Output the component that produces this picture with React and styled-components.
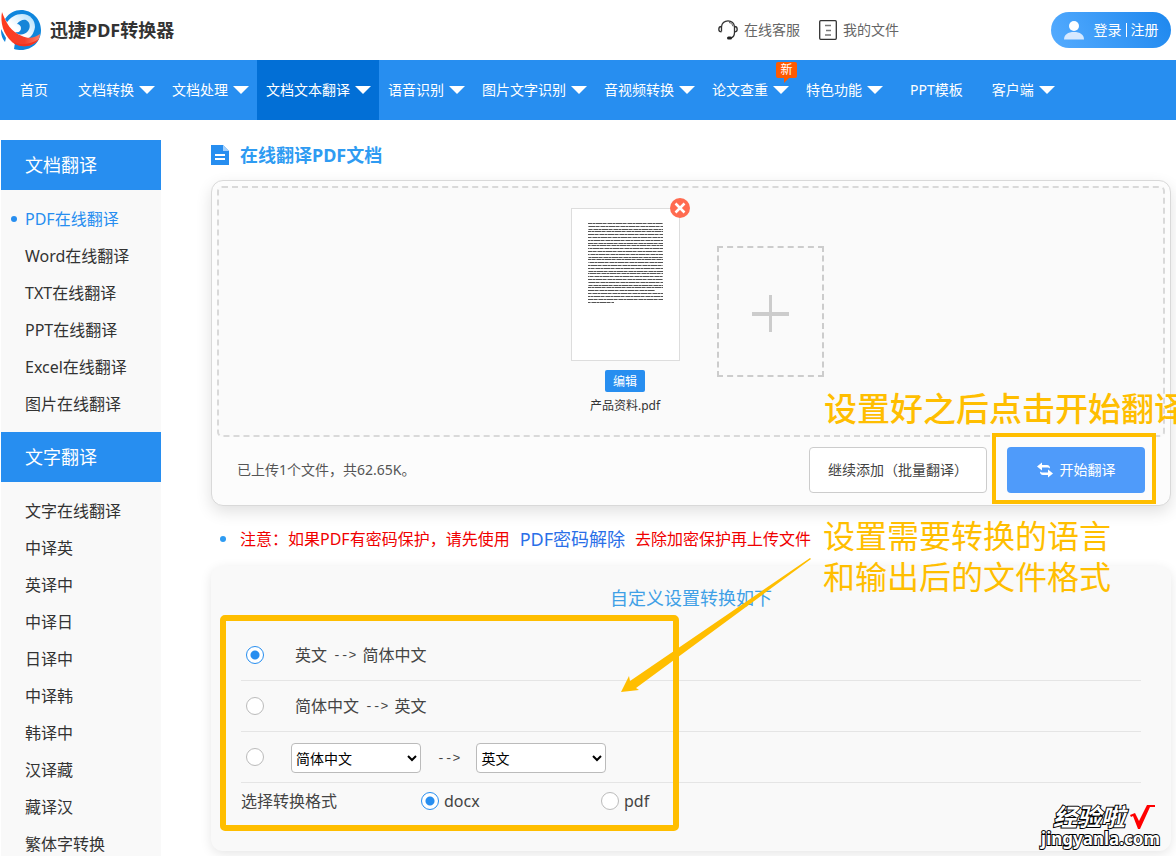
import React, { useState } from "react";
import styled, { createGlobalStyle, css } from "styled-components";

const navItems = [
  { label: "首页" },
  { label: "文档转换", menu: true },
  { label: "文档处理", menu: true },
  { label: "文档文本翻译", menu: true, active: true },
  { label: "语音识别", menu: true },
  { label: "图片文字识别", menu: true },
  { label: "音视频转换", menu: true },
  { label: "论文查重", menu: true, badge: "新" },
  { label: "特色功能", menu: true },
  { label: "PPT模板" },
  { label: "客户端", menu: true },
];

const sideGroups = [
  {
    title: "文档翻译",
    items: [
      "PDF在线翻译",
      "Word在线翻译",
      "TXT在线翻译",
      "PPT在线翻译",
      "Excel在线翻译",
      "图片在线翻译",
    ],
  },
  {
    title: "文字翻译",
    items: [
      "文字在线翻译",
      "中译英",
      "英译中",
      "中译日",
      "日译中",
      "中译韩",
      "韩译中",
      "汉译藏",
      "藏译汉",
      "繁体字转换",
    ],
  },
];

const languages = ["简体中文", "英文", "日文", "韩文"];

// y of each text line on the page thumbnail
const lineRows = [
  15, 18, 21, 23, 26, 29, 32, 35, 37, 40, 43, 46, 49, 51, 54, 57, 60, 63, 65,
  68, 71, 74, 77, 79, 82, 85, 88, 91, 94,
];

const lineWidth = (row) => {
  if (row === 82) return 67;
  if (row === 94) return 26;
  return 75;
};

const Logo = () => (
  <svg width="42" height="42" viewBox="0 0 42 42" aria-hidden="true">
    <defs>
      <linearGradient id="swirl" x1="0" y1="1" x2="1" y2="0">
        <stop offset="0.4" stopColor="#fff" />
        <stop offset="1" stopColor="#a9dcfb" />
      </linearGradient>
      <linearGradient id="sash" x1="0" y1="0" x2="1" y2="0">
        <stop offset="0" stopColor="#ff3b1d" />
        <stop offset="0.6" stopColor="#f4402c" />
        <stop offset="1" stopColor="#ff8069" />
      </linearGradient>
    </defs>
    <path
      d="M5 10C9 4 15 1 21 1c11 0 20 9 20 20 0 11-8 20-20 20-2 0-5-.3-7-1l2-13z"
      fill="#0f86dd"
    />
    <path d="M1 20c0 6 1 9 4 13l1-4z" fill="#0f86dd" />
    <path
      d="M6 15C10 8 16 5 22 5c8 0 13 6 13 13-1 7-5 12-11 13-9 1-16-7-18-16z"
      fill="url(#swirl)"
    />
    <path
      d="M17 15c2-3 6-5 9-4 4 2 5 7 2 11-3 4-9 5-13 1 4 1 6-1 6-4 0-2-2-4-4-4z"
      fill="#1585d8"
    />
    <path
      d="M2 3c-2 10 1 22 10 30 8 6 17 5 23 1 4-3 5-6 5-9-5 4-12 5-18 2C11 23 6 14 2 3z"
      fill="url(#sash)"
    />
    <path d="M12 33c8 6 17 5 23 1 2-1 3-3 4-4-8 5-17 7-27 3z" fill="#f2331f" />
  </svg>
);

const HeadsetIcon = () => (
  <svg width="20" height="20" viewBox="0 0 20 20" fill="none" aria-hidden="true">
    <path
      d="M3.5 11.5V7C3.5 3.5 6.5.8 10 .8s6.500 2.700 6.500 6.200v5.500c0 3-1.500 5-4 5.500"
      stroke="#333"
      strokeWidth="1.3"
    />
    <path d="M11 2.500c2 .3 3.500 1.600 4 3.800" stroke="#555" strokeWidth="1" />
    <path
      d="M3.500 6.500C1.500 6.500.8 7.500.8 9.200s.7 2.600 2.700 2.600M16.500 6.500c2 0 2.700 1 2.700 2.700s-.7 2.600-2.700 2.600"
      stroke="#333"
      strokeWidth="1.3"
    />
    <rect x="9" y="16.5" width="5" height="3" rx="1.5" fill="#222" />
  </svg>
);

const FilesIcon = () => (
  <svg width="18" height="20" viewBox="0 0 18 20" fill="none" aria-hidden="true">
    <rect x="0.7" y="0.7" width="16.6" height="18.6" rx="1" stroke="#333" strokeWidth="1.3" />
    <path d="M6 5.500h6M7 10.500h5M6 15h6" stroke="#777" strokeWidth="1.3" />
  </svg>
);

const UserIcon = () => (
  <svg width="20" height="20" viewBox="0 0 20 20" aria-hidden="true">
    <circle cx="10" cy="6" r="5" fill="#fff" />
    <path d="M0 19.500c0-5 4-7.500 10-7.500s10 2.500 10 7.500z" fill="#d6e9ff" />
  </svg>
);

const DocIcon = () => (
  <svg width="18" height="20" viewBox="0 0 18 20" aria-hidden="true">
    <path d="M0 0h12l6 6v14H0z" fill="#278ef0" />
    <path d="M12 0l6 6h-6z" fill="#a5d0fa" />
    <path d="M4 10h10M4 14h10" stroke="#fff" strokeWidth="2" />
  </svg>
);

const SwapIcon = () => (
  <svg width="16" height="16" viewBox="0 0 16 16" aria-hidden="true">
    <path d="M0 4.500L5 .5V3h5c2 0 3 1.500 3 3.500-1-.8-1.500-1-3-1H5v3z" fill="#fff" />
    <path d="M16 11.500l-5 4V13H6c-2 0-3-1.500-3-3.500 1 .8 1.500 1 3 1h5v-3z" fill="#fff" />
  </svg>
);

const PageThumb = () => (
  <svg width="107" height="151" viewBox="1 1 107 151" aria-hidden="true">
    {lineRows.map((row, i) => (
      <g key={row} fill="none">
        <path d={`M17 ${row}.5h${lineWidth(row)}`} stroke="#999" />
        <path
          d={`M17 ${row}.5h${lineWidth(row)}`}
          stroke="#555"
          strokeDasharray="4 1 2 1 6 1 3 2"
          strokeDashoffset={i * 7}
        />
      </g>
    ))}
  </svg>
);

const App = () => {
  const [direction, setDirection] = useState("en-zh");
  const [format, setFormat] = useState("docx");

  return (
    <Page>
      <GlobalStyle />
      <TopBar>
        <Brand href="#">
          <Logo />
          <span>迅捷PDF转换器</span>
        </Brand>
        <TopLinks>
          <TopLink href="#">
            <HeadsetIcon />
            在线客服
          </TopLink>
          <TopLink href="#">
            <FilesIcon />
            我的文件
          </TopLink>
        </TopLinks>
        <LoginButton type="button">
          <UserIcon />
          <span>登录</span>
          <i />
          <span>注册</span>
        </LoginButton>
      </TopBar>

      <Nav>
        {navItems.map((item) => (
          <NavItem href="#" key={item.label} $menu={item.menu} $active={item.active}>
            {item.label}
            {item.menu && <Caret />}
            {item.badge && <Badge>{item.badge}</Badge>}
          </NavItem>
        ))}
      </Nav>

      <Body>
        <Sidebar>
          {sideGroups.map((group) => (
            <section key={group.title}>
              <SideTitle>{group.title}</SideTitle>
              <SideList>
                {group.items.map((name) => (
                  <li key={name}>
                    <SideLink href="#" $active={name === "PDF在线翻译"}>
                      {name}
                    </SideLink>
                  </li>
                ))}
              </SideList>
            </section>
          ))}
        </Sidebar>

        <Main>
          <Title>
            <DocIcon />
            在线翻译PDF文档
          </Title>

          <UploadPanel>
            <DropZone>
              <FileCard>
                <Thumb>
                  <PageThumb />
                  <RemoveButton type="button" aria-label="删除">
                    <svg width="20" height="20" viewBox="0 0 20 20">
                      <path d="M5.500 5.500l9 9M14.500 5.500l-9 9" stroke="#fff" strokeWidth="2.5" />
                    </svg>
                  </RemoveButton>
                </Thumb>
                <EditButton type="button">编辑</EditButton>
                <FileName>产品资料.pdf</FileName>
              </FileCard>
              <AddTile type="button" aria-label="添加文件">
                <svg width="37" height="37" viewBox="0 0 37 37">
                  <path d="M0 19h37" stroke="#ccc" strokeWidth="4" />
                  <path d="M18.500 0v37" stroke="#ccc" strokeWidth="3" />
                </svg>
              </AddTile>
            </DropZone>
            <PanelFooter>
              <UploadInfo>已上传1个文件，共62.65K。</UploadInfo>
              <MoreButton type="button">继续添加（批量翻译）</MoreButton>
              <StartWrap>
                <StartButton type="button">
                  <SwapIcon />
                  开始翻译
                </StartButton>
                <StartFrame />
                <StartCaption>设置好之后点击开始翻译</StartCaption>
              </StartWrap>
            </PanelFooter>
          </UploadPanel>

          <Notice>
            注意：如果PDF有密码保护，请先使用
            <a href="#">PDF密码解除</a>
            去除加密保护再上传文件
          </Notice>

          <Settings>
            <h2>自定义设置转换如下</h2>
            <OptionRow>
              <Radio
                id="en-zh"
                name="direction"
                checked={direction === "en-zh"}
                onChange={() => setDirection("en-zh")}
              />
              <OptionLabel htmlFor="en-zh">
                英文<Arrow>--&gt;</Arrow>简体中文
              </OptionLabel>
            </OptionRow>
            <OptionRow>
              <Radio
                id="zh-en"
                name="direction"
                checked={direction === "zh-en"}
                onChange={() => setDirection("zh-en")}
              />
              <OptionLabel htmlFor="zh-en">
                简体中文<Arrow>--&gt;</Arrow>英文
              </OptionLabel>
            </OptionRow>
            <OptionRow>
              <Radio
                id="custom"
                name="direction"
                aria-label="自定义语言"
                checked={direction === "custom"}
                onChange={() => setDirection("custom")}
              />
              <LanguagePair>
                <Select aria-label="源语言" defaultValue="简体中文">
                  {languages.map((name) => (
                    <option key={name}>{name}</option>
                  ))}
                </Select>
                <Arrow>--&gt;</Arrow>
                <Select aria-label="目标语言" defaultValue="英文">
                  {languages.map((name) => (
                    <option key={name}>{name}</option>
                  ))}
                </Select>
              </LanguagePair>
            </OptionRow>
            <FormatRow>
              <span>选择转换格式</span>
              {["docx", "pdf"].map((name) => (
                <FormatLabel key={name}>
                  <Radio
                    name="format"
                    checked={format === name}
                    onChange={() => setFormat(name)}
                  />
                  {name}
                </FormatLabel>
              ))}
            </FormatRow>

            <SettingsFrame />
            <Pointer width="190" height="135" viewBox="0 0 190 135" aria-hidden="true">
              <path d="M0 134L8 118L9 123L189 0L190 1L15 130L18 132Z" fill="#ffbe00" />
            </Pointer>
            <SettingsCaption>
              设置需要转换的语言
              <br />
              和输出后的文件格式
            </SettingsCaption>
          </Settings>
        </Main>
      </Body>

      <Watermark>
        <div>
          <em>经验啦</em>
          <svg width="25" height="24" viewBox="0 0 25 24" aria-hidden="true">
            <path d="M0 10l5-2 4 8L17 0h8v2h-5L10 24H8L3 11l-2 1z" fill="#f00" stroke="none" />
          </svg>
        </div>
        <strong>jingyanla.com</strong>
      </Watermark>
    </Page>
  );
};

const GlobalStyle = createGlobalStyle`
  * {
    box-sizing: border-box;
  }

  body {
    margin: 0;
    background: #fff;
    color: #333;
    font-family: "Noto Sans", "Noto Sans CJK SC", sans-serif;
    font-size: 14px;
    line-height: 20px;
  }

  button, select, input {
    font-family: inherit;
    margin: 0;
  }

  h1, h2, p, ul {
    margin: 0;
    padding: 0;
  }

  a {
    text-decoration: none;
  }
`;

const Page = styled.div`
  position: relative;
  height: 100vh;
  overflow: hidden;
`;

const TopBar = styled.header`
  display: flex;
  align-items: center;
  height: 60px;
  padding-right: 5px;
`;

const Brand = styled.a`
  display: flex;
  align-items: center;
  gap: 8px;
  color: #333;
  font-size: 18px;
  font-weight: 700;
`;

const TopLinks = styled.div`
  display: flex;
  gap: 19px;
  margin-left: auto;
  margin-right: 152px;
`;

const TopLink = styled.a`
  display: flex;
  align-items: center;
  gap: 6px;
  color: #666;
`;

const LoginButton = styled.button`
  display: flex;
  align-items: center;
  justify-content: center;
  width: 120px;
  height: 36px;
  padding: 0;
  border: 0;
  border-radius: 18px;
  background: linear-gradient(60deg, #55acff, #1d87ee);
  color: #fff;
  font-size: 14px;
  line-height: 20px;

  svg {
    margin-right: 10px;
  }

  i {
    width: 1px;
    height: 14px;
    margin: 0 4px;
    background: #fff;
  }
`;

const Nav = styled.nav`
  display: flex;
  height: 60px;
  padding-left: 1px;
  background: #278ef0;
`;

const NavItem = styled.a`
  position: relative;
  display: flex;
  align-items: center;
  gap: 5px;
  flex-shrink: 0;
  padding: ${({ $menu }) => ($menu ? "0 8px 0 9px" : "0 20px 0 19px")};
  background: ${({ $active }) => ($active ? "#026fd6" : "transparent")};
  color: #fff;

  &:first-child {
    padding-right: 21px;
  }
`;

const Caret = styled.span`
  border: 8px solid transparent;
  border-top-color: #fff;
  border-bottom: 0;
`;

const Badge = styled.span`
  position: absolute;
  top: 2px;
  right: 0;
  width: 21px;
  border-radius: 2px;
  background: #ff5a00;
  font-size: 12px;
  line-height: 16px;
  text-align: center;

  &::after {
    content: "";
    position: absolute;
    top: 16px;
    left: 8px;
    border-top: 5px solid #ff5a00;
    border-right: 5px solid transparent;
  }
`;

const Body = styled.div`
  display: flex;
  gap: 50px;
  padding: 20px 5px 0 1px;
`;

const Sidebar = styled.aside`
  flex: 0 0 160px;
  background: #f9f9f9;
`;

const SideTitle = styled.h2`
  padding-left: 24px;
  background: #278ef0;
  color: #fff;
  font-size: 18px;
  font-weight: 400;
  line-height: 50px;
`;

const SideList = styled.ul`
  padding: 11px 0 9px;
  list-style: none;
`;

const SideLink = styled.a`
  position: relative;
  display: block;
  padding-left: 24px;
  color: #333;
  font-size: 16px;
  line-height: 37px;

  ${({ $active }) =>
    $active &&
    css`
      color: #278ef0;

      &::before {
        content: "";
        position: absolute;
        top: 15px;
        left: 10px;
        width: 6px;
        height: 6px;
        border-radius: 50%;
        background: #278ef0;
      }
    `}
`;

const Main = styled.main`
  flex: 1;
  min-width: 0;
`;

const Title = styled.h1`
  display: flex;
  align-items: center;
  gap: 11px;
  height: 30px;
  margin-bottom: 10px;
  color: #2e9bf2;
  font-size: 18px;
`;

const UploadPanel = styled.section`
  padding: 5px;
  border: 1px solid #d9d9d9;
  border-radius: 12px;
  background: #fcfcfc;
  box-shadow: 0 6px 16px rgba(0, 0, 0, 0.12);
`;

const DropZone = styled.div`
  display: flex;
  justify-content: center;
  gap: 37px;
  padding: 20px 0 19px 12px;
  border: 2px dashed #d9d9d9;
  border-radius: 5px;
  background: #fafafa;
`;

const FileCard = styled.div`
  display: flex;
  flex-direction: column;
  align-items: center;
`;

const Thumb = styled.div`
  position: relative;
  width: 109px;
  height: 153px;
  border: 1px solid #ddd;
  background: #fff;
`;

const RemoveButton = styled.button`
  position: absolute;
  top: -11px;
  right: -11px;
  width: 20px;
  height: 20px;
  padding: 0;
  border: 0;
  border-radius: 50%;
  background: #ff6b50;

  svg {
    display: block;
  }
`;

const EditButton = styled.button`
  width: 40px;
  height: 22px;
  margin-top: 9px;
  padding: 0;
  border: 0;
  border-radius: 2px;
  background: #278ef0;
  color: #fff;
  font-size: 12px;
`;

const FileName = styled.p`
  margin-top: 4px;
  font-size: 12px;
`;

const AddTile = styled.button`
  display: flex;
  align-items: center;
  justify-content: center;
  width: 107px;
  height: 131px;
  margin-top: 38px;
  padding: 4px 0 0;
  border: 2px dashed #ccc;
  background: transparent;
`;

const PanelFooter = styled.div`
  display: flex;
  align-items: center;
  gap: 20px;
  padding: 10px 20px 7px;
`;

const UploadInfo = styled.p`
  margin-right: auto;
  color: #555;
`;

const MoreButton = styled.button`
  width: 178px;
  height: 46px;
  padding: 0;
  border: 1px solid #ccc;
  border-radius: 4px;
  background: #fff;
  color: #444;
  font-size: 14px;
  line-height: 20px;
`;

const StartWrap = styled.div`
  position: relative;
`;

const StartButton = styled.button`
  display: flex;
  align-items: center;
  justify-content: center;
  gap: 7px;
  width: 138px;
  height: 46px;
  border: 0;
  border-radius: 4px;
  background: #4f9bfa;
  color: #fff;
  font-size: 14px;
  line-height: 20px;
`;

const StartFrame = styled.div`
  position: absolute;
  inset: -14px -11px -11px -15px;
  border: 4px solid #ffbe00;
  pointer-events: none;
`;

const Caption = styled.p`
  position: absolute;
  color: #ffbe00;
  white-space: nowrap;
  pointer-events: none;
`;

const StartCaption = styled(Caption)`
  top: -58px;
  left: -183px;
  font-size: 33px;
  font-weight: 500;
  line-height: 40px;
`;

const Notice = styled.p`
  display: flex;
  align-items: center;
  height: 60px;
  padding-top: 6px;
  color: #f00000;
  font-size: 16px;

  &::before {
    content: "";
    width: 6px;
    height: 6px;
    margin: 0 14px 0 9px;
    border-radius: 50%;
    background: #2e9bf2;
  }

  a {
    margin: 0 10px;
    color: #2a6fe8;
    font-size: 18px;
  }
`;

const Settings = styled.section`
  position: relative;
  padding: 16px 30px 32px;
  border-radius: 12px;
  background: #f9f9f9;
  box-shadow: 0 3px 12px rgba(0, 0, 0, 0.1);
  color: #444;
  font-size: 16px;

  h2 {
    margin-bottom: 16px;
    color: #3fa0e6;
    font-size: 18px;
    font-weight: 400;
    line-height: 32px;
    text-align: center;
  }
`;

const OptionRow = styled.div`
  display: flex;
  align-items: center;
  height: 51px;
  padding-left: 5px;
  border-bottom: 1px solid #e5e5e5;
`;

const Radio = styled.input.attrs({ type: "radio" })`
  appearance: none;
  flex: none;
  width: 18px;
  height: 18px;
  border: 1px solid ${({ checked }) => (checked ? "#278ef0" : "#bbb")};
  border-radius: 50%;
  background: ${({ checked }) =>
    checked ? "radial-gradient(circle, #278ef0 4px, #fff 5px)" : "#fff"};
`;

const OptionLabel = styled.label`
  display: flex;
  align-items: center;
  gap: 6px;
  margin-left: 31px;
`;

const Arrow = styled.span`
  padding-top: 2px;
  font-family: "Liberation Mono", monospace;
  font-size: 13px;
`;

const LanguagePair = styled.div`
  display: flex;
  align-items: center;
  gap: 16px;
  margin-left: 27px;
  padding-top: 2px;
`;

const Select = styled.select`
  width: 130px;
  height: 30px;
  border: 1px solid #bbb;
  border-radius: 4px;
  background: #fff;
  color: #000;
  font-size: 14px;
`;

const FormatRow = styled.div`
  display: flex;
  align-items: center;
  height: 36px;

  & > span {
    width: 180px;
  }
`;

const FormatLabel = styled.label`
  display: flex;
  align-items: center;
  gap: 5px;
  width: 180px;
`;

const SettingsFrame = styled.div`
  position: absolute;
  top: 49px;
  left: 9px;
  width: 459px;
  height: 216px;
  border: 6px solid #ffbe00;
  border-radius: 5px;
  pointer-events: none;
`;

const Pointer = styled.svg`
  position: absolute;
  top: -8px;
  left: 410px;
  pointer-events: none;
`;

const SettingsCaption = styled(Caption)`
  top: -51px;
  left: 612px;
  font-size: 32px;
  line-height: 41px;
`;

const Watermark = styled.div`
  position: absolute;
  right: 16px;
  bottom: 7px;
  display: flex;
  flex-direction: column;
  align-items: flex-end;
  color: #fff;
  -webkit-text-stroke: 2px #000;
  paint-order: stroke fill;

  div {
    display: flex;
    align-items: center;
    gap: 5px;
    padding-right: 5px;
  }

  em {
    font-size: 24px;
    font-weight: 700;
    line-height: 24px;
  }

  strong {
    font-size: 17px;
    line-height: 20px;
  }
`;

export default App;
